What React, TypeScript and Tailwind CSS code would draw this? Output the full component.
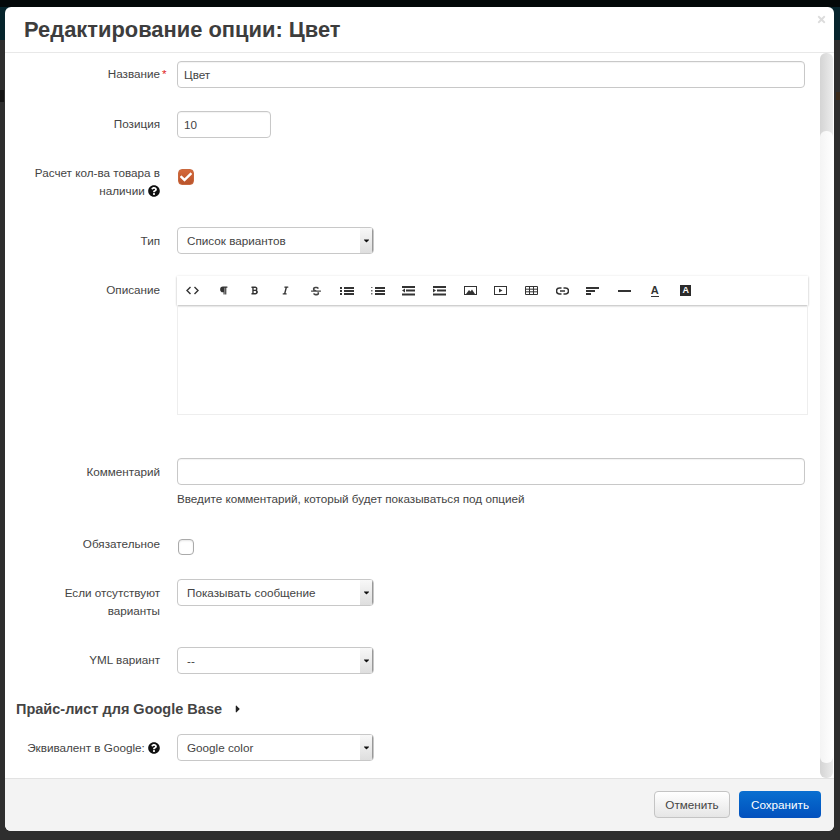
import { ReactNode } from 'react';
import { FaCheck, FaTimes, FaQuestionCircle, FaCaretRight, FaCaretDown, FaParagraph, FaBold, FaItalic, FaStrikethrough } from 'react-icons/fa';

function Bars({ kind }: { kind: 'ul' | 'ol' | 'out' | 'in' | 'align' }) {
  return (
    <svg width="14" height="10" viewBox="0 0 14 10" fill="#333">
      {kind === 'ul' && (
        <>
          <rect x="0" y="1" width="2" height="2" />
          <rect x="0" y="4" width="2" height="2" />
          <rect x="0" y="7" width="2" height="2" />
          <rect x="4" y="1" width="10" height="2" />
          <rect x="4" y="4" width="10" height="2" />
          <rect x="4" y="7" width="10" height="2" />
        </>
      )}
      {kind === 'ol' && (
        <>
          <rect x="0" y="1" width="1.5" height="1" opacity="0.7" />
          <rect x="0" y="4" width="1.5" height="1.5" opacity="0.7" />
          <rect x="0" y="7" width="1.5" height="1.5" opacity="0.7" />
          <rect x="4" y="1" width="10" height="2" />
          <rect x="4" y="4" width="10" height="2" />
          <rect x="4" y="7" width="10" height="2" />
        </>
      )}
      {kind === 'out' && (
        <>
          <rect x="1" y="0" width="13" height="2" />
          <rect x="5" y="3.500" width="9" height="2" />
          <rect x="1" y="7.500" width="13" height="2" />
          <path d="M1 4.500 4 2.500v4z" />
        </>
      )}
      {kind === 'in' && (
        <>
          <rect x="1" y="0" width="13" height="2" />
          <rect x="5" y="3.500" width="9" height="2" />
          <rect x="1" y="7.500" width="13" height="2" />
          <path d="M4 4.500 1 2.500v4z" />
        </>
      )}
      {kind === 'align' && (
        <>
          <rect x="0" y="1" width="13" height="2" />
          <rect x="0" y="4" width="9" height="2" />
          <rect x="0" y="7" width="5" height="2" />
        </>
      )}
    </svg>
  );
}

const toolbar: ReactNode[] = [
  <svg width="13" height="9" viewBox="0 0 13 9" fill="none" stroke="#333" strokeWidth="1.4">
    <path d="M4.5 1 1 4.5 4.5 8M8.500 1 12 4.500 8.500 8" />
  </svg>,
  <FaParagraph size={9} color="#333" />,
  <FaBold size={9} color="#333" />,
  <FaItalic size={9} color="#333" />,
  <FaStrikethrough size={10} color="#444" />,
  <Bars kind="ul" />,
  <Bars kind="ol" />,
  <Bars kind="out" />,
  <Bars kind="in" />,
  <svg width="13" height="9" viewBox="0 0 13 9">
    <rect x="0.500" y="0.500" width="12" height="8" fill="none" stroke="#333" />
    <path d="M2 8 5 4l1.500 1.500L8 3.500 11 8z" fill="#333" />
  </svg>,
  <svg width="13" height="9" viewBox="0 0 13 9">
    <rect x="0.500" y="0.500" width="12" height="8" fill="none" stroke="#333" />
    <path d="M5 2.500 8.500 4.500 5 6.500z" fill="#333" />
  </svg>,
  <svg width="13" height="9" viewBox="0 0 13 9" fill="none" stroke="#333">
    <path d="M.5.500h12v8H.5zM.5 3.200h12M.5 5.800h12M4.500.500v8M8.500.500v8" />
  </svg>,
  <svg width="13" height="8" viewBox="0 0 13 8" fill="none" stroke="#333" strokeWidth="1.500">
    <path d="M5.500 1H3.500a3 3 0 0 0 0 6h2M7.500 1h2a3 3 0 0 1 0 6h-2M4 4h5" />
  </svg>,
  <Bars kind="align" />,
  <svg width="13" height="2" viewBox="0 0 13 2"><rect width="13" height="2" fill="#333" /></svg>,
  <span className="flex flex-col items-center text-[11px] leading-[10px] font-bold text-[#333]">
    A
    <span className="mt-[1px] h-[1px] w-[8px] bg-[#333]" />
  </span>,
  <span className="flex h-[11px] w-[11px] items-center justify-center bg-[#2b2b2b] text-[9px] font-bold leading-none text-white">A</span>,
];

function Row({ label, top, children, labelTop = 'pt-[4px]' }: { label: ReactNode; top: string; children: ReactNode; labelTop?: string }) {
  return (
    <div className={`flex items-start ${top}`}>
      <div className={`w-[155px] shrink-0 pl-[20px] text-right text-[11.7px] leading-[18px] text-[#444] ${labelTop}`}>{label}</div>
      <div className="ml-[17px] min-w-0 flex-1">{children}</div>
    </div>
  );
}

function TextInput({ value, className }: { value: string; className: string }) {
  return (
    <input
      readOnly
      value={value}
      className={`h-[27px] rounded-[4px] border border-[#c8c8c8] bg-white px-[6px] text-[11.7px] text-[#444] shadow-[inset_0_1px_1px_rgba(0,0,0,0.05)] outline-none ${className}`}
    />
  );
}

function Select({ value }: { value: string }) {
  return (
    <div className="flex h-[27px] w-[197px] items-stretch overflow-hidden rounded-[4px] border border-[#c8c8c8] bg-white">
      <span className="flex-1 pl-[9px] text-[11.7px] leading-[26px] text-[#444]">{value}</span>
      <span className="flex w-[13px] items-center justify-center border-r border-r-[#999] bg-gradient-to-b from-[#f8f8f8] to-[#dedede]">
        <FaCaretDown size={9} color="#111" />
      </span>
    </div>
  );
}

function Help() {
  return <FaQuestionCircle size={12} color="#111" className="inline-block align-[-2px]" />;
}

function Checkbox({ checked }: { checked?: boolean }) {
  return checked ? (
    <span className="flex h-[16px] w-[16px] items-center justify-center rounded-[4px] border border-[#c9683e] bg-gradient-to-b from-[#d4683a] to-[#b9542c]">
      <FaCheck size={12} color="#fff" />
    </span>
  ) : (
    <span className="block h-[16px] w-[16px] rounded-[4px] border border-[#aaa] bg-white shadow-[inset_0_1px_2px_rgba(0,0,0,0.1)]" />
  );
}

export default function App() {
  return (
    <div className="relative h-[840px] w-[840px] overflow-hidden bg-[#2e2e2e] font-['Liberation_Sans',sans-serif]">
      {/* page dimmed behind the modal */}
      <div className="absolute inset-x-0 top-0 h-[40px] border-t-[7px] border-t-[#030809] bg-[#06242c]" />
      <div className="absolute left-0 top-[90px] h-[12px] w-[4px] bg-[#141414]" />
      <div className="absolute right-0 top-[92px] h-[8px] w-[4px] bg-[#3a2a1a]" />
      <div className="absolute left-[5px] top-[7px] flex h-[824px] w-[829px] flex-col overflow-hidden rounded-[6px] bg-white">
        <div className="relative h-[46px] shrink-0 border-b border-[#e8e8e8] pl-[19px] pt-[8px]">
          <h1 className="text-[21.900px] font-bold leading-[29px] text-[#3d3d3d]">Редактирование опции: Цвет</h1>
          <FaTimes size={11} color="#dcdcdc" className="absolute right-[7px] top-[7px]" />
        </div>

        <div className="flex min-h-0 flex-1">
          <div className="min-w-0 flex-1 overflow-hidden">
            <div className="w-[800px] pb-[20px]">
              <Row top="mt-[8px]" label={<span className="relative">Название<span className="absolute left-full top-[-2px] ml-[2px] text-[#e02020]">*</span></span>}>
                <TextInput value="Цвет" className="w-[628px]" />
              </Row>
              <Row top="mt-[23px]" label="Позиция">
                <TextInput value="10" className="w-[94px]" />
              </Row>
              <Row top="mt-[25px]" labelTop="pt-[1px]" label={<>Расчет кол-ва товара в наличии <Help /></>}>
                <div className="pl-[1px] pt-[6px]"><Checkbox checked /></div>
              </Row>
              <Row top="mt-[27px]" labelTop="pt-[5px]" label="Тип">
                <Select value="Список вариантов" />
              </Row>
              <Row top="mt-[22px]" labelTop="pt-[5px]" label="Описание">
                <div className="w-[631px]">
                  <div className="flex h-[29px] items-center bg-white pl-[0.500px] shadow-[0_1px_2px_rgba(0,0,0,0.25),0_0_3px_rgba(0,0,0,0.06)]">
                    {toolbar.map((icon, i) => (
                      <span key={i} className="flex h-[29px] w-[30.800px] items-center justify-center">{icon}</span>
                    ))}
                  </div>
                  <div className="h-[110px] border border-t-0 border-[#eeeeee]" />
                </div>
              </Row>
              <Row top="mt-[43px]" labelTop="pt-[5px]" label="Комментарий">
                <TextInput value="" className="block w-[628px]" />
                <p className="mt-[5px] text-[11.7px] leading-[18px] text-[#444]">Введите комментарий, который будет показываться под опцией</p>
              </Row>
              <Row top="mt-[22px]" labelTop="pt-[5px]" label="Обязательное">
                <div className="pl-[1px] pt-[9px]"><Checkbox /></div>
              </Row>
              <Row top="mt-[24px]" labelTop="pt-[5px]" label="Если отсутствуют варианты">
                <Select value="Показывать сообщение" />
              </Row>
              <Row top="mt-[27px]" label="YML вариант">
                <Select value="--" />
              </Row>
              <h2 className="mt-[25px] flex items-center pl-[11px] text-[14.500px] font-bold leading-[20px] text-[#444]">
                Прайс-лист для Google Base
                <FaCaretRight size={12} color="#222" className="ml-[10px]" />
              </h2>
              <Row top="mt-[15px]" labelTop="pt-[5px]" label={<>Эквивалент в Google: <Help /></>}>
                <Select value="Google color" />
              </Row>
            </div>
          </div>
          <div className="relative mr-[1px] w-[13px] shrink-0 rounded-[6px] bg-gradient-to-r from-[#d4d4d4] to-[#ececec]">
            <div className="absolute inset-x-0 top-[78px] h-[632px] rounded-[6px] bg-gradient-to-r from-[#f4f4f4] to-white" />
          </div>
        </div>

        <div className="flex h-[53px] shrink-0 items-start justify-end gap-[9px] border-t border-[#e2e2e2] bg-[#f3f3f3] pr-[13px] pt-[12px]">
          <button className="h-[27px] w-[76px] rounded-[4px] border border-[#c4c4c4] bg-gradient-to-b from-white to-[#e6e6e6] text-[11.7px] text-[#444]">Отменить</button>
          <button className="h-[27px] w-[82px] rounded-[4px] bg-gradient-to-b from-[#0a6fd0] to-[#0350bd] text-[11.7px] text-white">Сохранить</button>
        </div>
      </div>
    </div>
  );
}
